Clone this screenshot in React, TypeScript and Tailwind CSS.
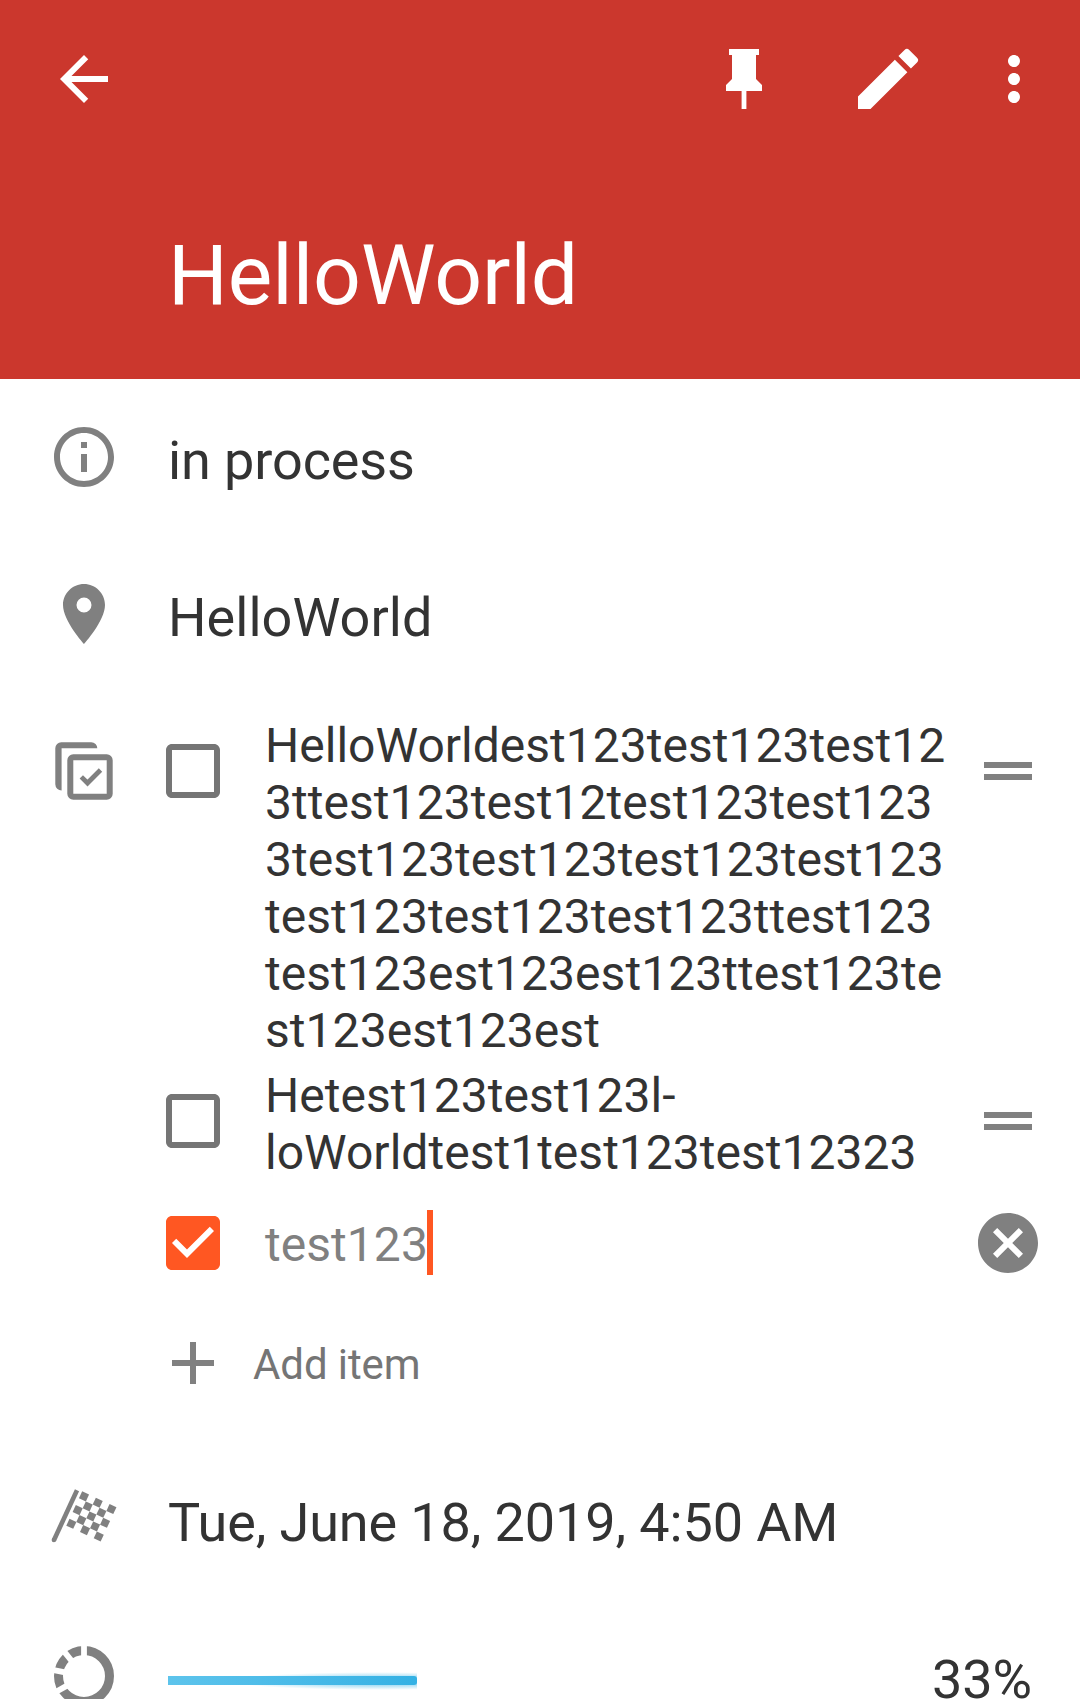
import React from 'react';

type Children = { children: React.ReactNode };

// Material icons are drawn on a 24 unit grid; the others use their own 72 unit grid.
function Icon({ children, className = '', grid = 24 }: Children & { className?: string; grid?: number }) {
  return (
    <svg viewBox={`0 0 ${grid} ${grid}`} className={`size-[72px] shrink-0 ${className}`} fill="currentColor" aria-hidden="true">
      {children}
    </svg>
  );
}

function Row({ icon, children }: Children & { icon: React.ReactNode }) {
  return (
    <section className="flex h-[157px] items-start">
      <div className="w-[168px] shrink-0 pt-[42px] pl-12">{icon}</div>
      {children}
    </section>
  );
}

function Label({ children, className = '' }: Children & { className?: string }) {
  return <p className={`pt-[50px] text-[54px] leading-[63px] whitespace-nowrap ${className}`}>{children}</p>;
}

function Checkbox({ checked = false }: { checked?: boolean }) {
  return checked ? (
    <Icon className="text-[#ff5722]">
      <path d="M19 3H5c-1.11 0-2 .9-2 2v14c0 1.1.89 2 2 2h14c1.11 0 2-.9 2-2V5c0-1.1-.89-2-2-2zm-9 14l-5-5 1.41-1.41L10 14.17l7.59-7.59L19 8l-9 9z" />
    </Icon>
  ) : (
    <Icon className="text-[#757575]">
      <path d="M19 5v14H5V5h14m0-2H5c-1.1 0-2 .9-2 2v14c0 1.1.9 2 2 2h14c1.1 0 2-.9 2-2V5c0-1.1-.9-2-2-2z" />
    </Icon>
  );
}

function DragHandle() {
  return (
    <div className="mt-[45px] mr-12 ml-auto flex h-[18px] w-12 shrink-0 flex-col justify-between">
      <div className="h-1.5 bg-[#808080]" />
      <div className="h-1.5 bg-[#808080]" />
    </div>
  );
}

function ChecklistItem({ lines }: { lines: { text: string; tight?: boolean }[] }) {
  return (
    <li className="flex items-start">
      <div className="mt-[18px] w-[108px] shrink-0">
        <Checkbox />
      </div>
      <div className="text-5xl leading-[57px] whitespace-nowrap">
        {lines.map(({ text, tight }) => (
          <div key={text} className={tight ? 'leading-[57px] tracking-[0.02px]' : 'leading-[57px] tracking-[0.05px]'}>
            {text}
          </div>
        ))}
      </div>
      <DragHandle />
    </li>
  );
}

const FIRST_ITEM = [
  { text: 'HelloWorldest123test123test12', tight: true },
  { text: '3ttest123test12test123test123' },
  { text: '3test123test123test123test123' },
  { text: 'test123test123test123ttest123' },
  { text: 'test123est123est123ttest123te' },
  { text: 'st123est123est' },
];

const SECOND_ITEM = [{ text: 'Hetest123test123l-' }, { text: 'loWorldtest1test123test12323', tight: true }];

const FLAG_CELLS = [0, 1, 2, 3, 4].flatMap((row) =>
  [0, 1, 2, 3, 4].filter((col) => (row + col) % 2 === 0).map((col) => ({ row, col })),
);

function ChecklistIcon() {
  return (
    <Icon grid={72}>
      <path d="M49.3 13.3H13.6v42.2a6.3 6.3 0 0 1-6.3-6.2v-36a6 6 0 0 1 6-6h30a6 6 0 0 1 6 6z" />
      <rect x="22.3" y="22.3" width="39.4" height="39.4" rx="3" fill="none" stroke="currentColor" strokeWidth="6" />
      <path d="M33.3 41.9l6.2 6.1 13-13" fill="none" stroke="currentColor" strokeWidth="4.8" />
    </Icon>
  );
}

function FlagIcon() {
  return (
    <Icon grid={72}>
      <path d="M29 7.2L5.9 57.2" stroke="currentColor" strokeWidth="4.6" />
      <circle cx="5.9" cy="57" r="2.3" />
      <g transform="translate(36 13.4) rotate(24.8)">
        {FLAG_CELLS.map(({ row, col }) => (
          <rect key={`${row}-${col}`} x={col * 7.55 - 3.8} y={row * 7.55 - 3.8} width="7.6" height="7.6" />
        ))}
      </g>
    </Icon>
  );
}

function ProgressIcon() {
  return (
    <Icon grid={72}>
      <circle cx="36" cy="36" r="25.5" fill="none" stroke="currentColor" strokeWidth="9" />
      <g stroke="#fff" strokeWidth="5.8">
        <path d="M36 18V4" />
        <path d="M36 18V4" transform="rotate(-39.2 36 36)" />
        <path d="M36 18V4" transform="rotate(-79 36 36)" />
        <path d="M36 18V4" transform="rotate(-119.5 36 36)" />
      </g>
    </Icon>
  );
}

export default function App() {
  return (
    <div className="h-[1699px] w-[1080px] overflow-hidden bg-white font-['Roboto',sans-serif] text-[#333333]">
      <header className="h-[379px] bg-[#cb372d] text-white">
        <div className="flex items-start pt-[39px] pl-12">
          <Icon className="mt-1">
            <path d="M20 11H7.83l5.59-5.59L12 4l-8 8 8 8 1.41-1.41L7.83 13H20v-2z" />
          </Icon>
          <Icon className="mt-1 ml-[588px]">
            <path d="M16 12V4h1V2H7v2h1v8l-2 2v2h5.2v6h1.6v-6H18v-2l-2-2z" />
          </Icon>
          <svg viewBox="0 0 24 24" className="ml-[68px] size-20 shrink-0" fill="currentColor" aria-hidden="true">
            <path d="M3 17.25V21h3.75L17.81 9.94l-3.75-3.75L3 17.25zM20.71 7.04a.996.996 0 0 0 0-1.41l-2.34-2.34a.996.996 0 0 0-1.41 0l-1.83 1.83 3.75 3.75 1.83-1.83z" />
          </svg>
          <Icon className="mt-1 ml-[50px]">
            <path d="M12 8c1.1 0 2-.9 2-2s-.9-2-2-2-2 .9-2 2 .9 2 2 2zm0 2c-1.1 0-2 .9-2 2s.9 2 2 2 2-.9 2-2-.9-2-2-2zm0 6c-1.1 0-2 .9-2 2s.9 2 2 2 2-.9 2-2-.9-2-2-2z" />
          </Icon>
        </div>
        <h1 className="mt-[107px] pl-[168px] text-[84px] leading-[99px] tracking-[-0.05px]">HelloWorld</h1>
      </header>

      <main className="text-[#333333]">
        <Row
          icon={
            <Icon className="text-[#808080]">
              <path d="M11 17h2v-6h-2v6zm1-15C6.48 2 2 6.48 2 12s4.48 10 10 10 10-4.48 10-10S17.52 2 12 2zm0 18c-4.41 0-8-3.59-8-8s3.59-8 8-8 8 3.59 8 8-3.59 8-8 8zM11 9h2V7h-2v2z" />
            </Icon>
          }
        >
          <Label className="tracking-[-0.1px]">in process</Label>
        </Row>
        <Row
          icon={
            <Icon className="text-[#808080]">
              <path d="M12 2C8.13 2 5 5.13 5 9c0 5.25 7 13 7 13s7-7.75 7-13c0-3.87-3.13-7-7-7zm0 9.5a2.5 2.5 0 0 1 0-5 2.5 2.5 0 0 1 0 5z" />
            </Icon>
          }
        >
          <Label className="tracking-[0.05px]">HelloWorld</Label>
        </Row>

        <section className="flex h-[748px] items-start">
          <div className="w-[157px] shrink-0 pt-[42px] pl-12 text-[#808080]">
            <ChecklistIcon />
          </div>
          <ul className="flex-1 pt-6">
            <ChecklistItem lines={FIRST_ITEM} />
            <div className="h-2" />
            <ChecklistItem lines={SECOND_ITEM} />
            <li className="mt-[17px] flex h-[90px] items-start">
              <div className="mt-[9px] w-[108px] shrink-0">
                <Checkbox checked />
              </div>
              <span className="mt-[18px] w-[162px] text-5xl leading-[57px] tracking-[0.05px] whitespace-nowrap text-[#808080]">test123</span>
              <div className="mt-3 h-[65px] w-1.5 shrink-0 bg-[#ff5722]" />
              <Icon className="mt-[9px] mr-9 ml-auto text-[#808080]">
                <path d="M12 2C6.47 2 2 6.47 2 12s4.47 10 10 10 10-4.47 10-10S17.53 2 12 2zm5 13.59L15.59 17 12 13.41 8.41 17 7 15.59 10.59 12 7 8.41 8.41 7 12 10.59 15.59 7 17 8.41 13.41 12 17 15.59z" />
              </Icon>
            </li>
            <li className="mt-[39px] flex h-[72px] items-start">
              <div className="w-[96px] shrink-0 text-[#808080]">
                <Icon>
                  <path d="M19 13h-6v6h-2v-6H5v-2h6V5h2v6h6v2z" />
                </Icon>
              </div>
              <span className="mt-[13px] text-[42px] leading-[49px] tracking-[-0.1px] text-[#757575]">Add item</span>
            </li>
          </ul>
        </section>

        <Row
          icon={
            <div className="text-[#808080]">
              <FlagIcon />
            </div>
          }
        >
          <Label className="tracking-[-0.12px]">Tue, June 18, 2019, 4:50 AM</Label>
        </Row>
        <Row
          icon={
            <div className="text-[#808080]">
              <ProgressIcon />
            </div>
          }
        >
          <div className="relative mt-[78px] h-[9px] w-[249px]">
            <div className="absolute top-[-4px] right-0 h-[18px] w-[190px] bg-[radial-gradient(ellipse_at_80%_50%,#33b1e4cc_0%,#33b1e466_35%,transparent_70%)]" />
            <div className="relative h-full rounded-r-[3px] bg-linear-to-r from-[#5dc4ec] to-[#33b1e4]" />
          </div>
          <div className="mr-12 ml-auto">
            <Label className="tracking-[-0.1px]">33%</Label>
          </div>
        </Row>
      </main>
    </div>
  );
}
